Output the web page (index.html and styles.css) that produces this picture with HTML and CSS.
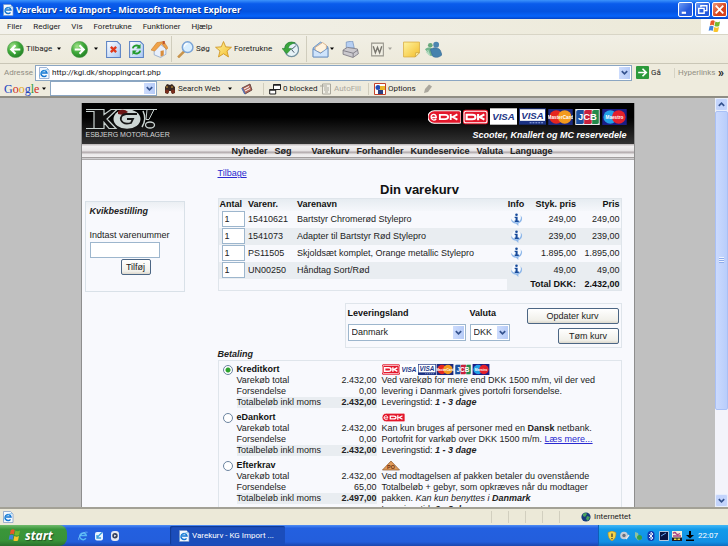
FILE: index.html
```html
<!DOCTYPE html>
<html lang="da">
<head>
<meta charset="utf-8">
<title>Varekurv - KG Import</title>
<link rel="stylesheet" href="styles.css">
</head>
<body>
<svg class="paints" aria-hidden="true">
  <defs>
    <radialGradient id="green" cx=".35" cy=".3" r=".8"><stop offset="0" stop-color="#a5e58c"/><stop offset=".5" stop-color="#3fa93a"/><stop offset="1" stop-color="#1d7a22"/></radialGradient>
    <linearGradient id="paper" x2="1" y2="1"><stop offset="0" stop-color="#fff"/><stop offset="1" stop-color="#a9c8f3"/></linearGradient>
    <linearGradient id="gold" x2="1" y2="1"><stop offset="0" stop-color="#fff4a0"/><stop offset="1" stop-color="#f3bd2c"/></linearGradient>
  </defs>
</svg>
<svg class="sprite" aria-hidden="true">
  <symbol id="back" viewBox="0 0 16 16"><circle cx="8" cy="8" r="7.6" fill="url(#green)" stroke="#4c9a48" stroke-width=".6"/><path d="M12.5 8H4.5M8 4 4 8l4 4" fill="none" stroke="#fff" stroke-width="2"/></symbol>
  <symbol id="fwd" viewBox="0 0 16 16"><circle cx="8" cy="8" r="7.6" fill="url(#green)" stroke="#4c9a48" stroke-width=".6"/><path d="M3.5 8h8M8 4l4 4-4 4" fill="none" stroke="#fff" stroke-width="2"/></symbol>
  <symbol id="stop" viewBox="0 0 16 16"><path d="M1.5.5h10l3 3v12h-13z" fill="url(#paper)" stroke="#5c83c4"/><path d="m5.500 5.500 5 5m0-5-5 5" stroke="#e03a1c" stroke-width="2.2"/></symbol>
  <symbol id="refresh" viewBox="0 0 16 16"><path d="M1.500.5h10l3 3v12h-13z" fill="url(#paper)" stroke="#5c83c4"/><path d="M4.500 7c.5-3 4-3.500 6-2M11.500 9c-.5 3-4 3.500-6 2" fill="none" stroke="#219a2b" stroke-width="1.800"/><path d="M11.800 2.800V7H7.800zM4.200 13.200V9h4z" fill="#219a2b"/></symbol>
  <symbol id="home" viewBox="0 0 16 16"><path d="M3 8v5l6 2.500 5-3V7L8.500 3z" fill="#e9f0fb" stroke="#86a0c8" stroke-width=".7"/><path d="M0 8.500 5.500 1.500 12 .5l4 6-1.500 1.500L10 2.500 3.500 9.500z" fill="#f0a348" stroke="#c4752a" stroke-width=".5"/><path d="M11 0h2v3h-2z" fill="#c05530"/><path d="M9 9.500l3-.7v4.700l-3 1.300z" fill="#d88e3c"/></symbol>
  <symbol id="search" viewBox="0 0 16 16"><path d="m7 9.500-6 6" stroke="#c8944c" stroke-width="2.400"/><circle cx="10" cy="5.800" r="5" fill="#d9efff" stroke="#7ba4d6" stroke-width="1.400"/><path d="M7 5.500a3 3 0 0 1 3-3" stroke="#fff" stroke-width="1.200" fill="none"/></symbol>
  <symbol id="star" viewBox="0 0 16 16"><path d="m8 .5 2.100 5 5.400.4-4.200 3.500 1.400 5.600L8 12l-4.700 3 1.400-5.600L.5 5.900l5.400-.4z" fill="url(#gold)" stroke="#cf9420" stroke-width=".8"/></symbol>
  <symbol id="history" viewBox="0 0 16 16"><circle cx="9" cy="8" r="6.600" fill="#e6f2f7" stroke="#73919f" stroke-width="1.200"/><path d="M9 8l4-3.500M9 8l2.500 3" stroke="#456" stroke-width=".9"/><path d="M12.500 1.800C7-.5 2.500 2.500 2.800 7H0l4.500 5L9 7H6c0-2.500 2.500-4.500 6.500-5.200z" fill="#3ba63c" stroke="#1f7c28" stroke-width=".5"/></symbol>
  <symbol id="mail" viewBox="0 0 16 16"><path d="M1 6.500 8 1l7 4.500V15H1z" fill="#9ec3ed" stroke="#5683ba" stroke-width=".7"/><path d="M3 6l7-4.500 3.500 2.500V9L8 11 3 9z" fill="#fff3df" stroke="#d39a63" stroke-width=".6"/><path d="m1 7.500 7 4L15 6.500V15H1z" fill="#cfe4fb" stroke="#5683ba" stroke-width=".7"/></symbol>
  <symbol id="print" viewBox="0 0 16 16"><path d="M4 7V1l6-1 1.500 6.500z" fill="#b7d0f3" stroke="#7592bd" stroke-width=".7"/><path d="M1 8.500 5 6l9.500 1.500.9 4.500-5 3.500L1 12.500z" fill="#cbc9ce" stroke="#7c7a83" stroke-width=".8"/><path d="m1 9 9.500 2.500L15 8.500M10.500 11.500v3.500" fill="none" stroke="#77757e" stroke-width=".8"/></symbol>
  <symbol id="word" viewBox="0 0 16 16"><path d="M2.500 2h11v12h-11z" fill="#f1efe4" stroke="#97958b"/><path d="M4 5l2 6 2-5 2 5 2-6" fill="none" stroke="#77756d" stroke-width="1.300"/></symbol>
  <symbol id="note" viewBox="0 0 16 16"><path d="M.5 1h15v10l-4 4H.5z" fill="url(#gold)" stroke="#dcb14a" stroke-width=".8"/><path d="m11.500 15 .5-4 3.500 0z" fill="#fff2a5" stroke="#c39a38" stroke-width=".6"/></symbol>
  <symbol id="msn" viewBox="0 0 16 16"><circle cx="5" cy="4" r="2.200" fill="#67a87c"/><circle cx="10.500" cy="3.500" r="2.700" fill="#4d85b0"/><path d="M0 8c2-2.500 6-2.500 7 0l2 4-3 2C3 14 3 10 0 8z" fill="#73b58d"/><path d="M5 8c3-2.500 8-2 9.500 1l1.500 4c-3 3-7 3-9 1z" fill="#4682ad" stroke="#35658f" stroke-width=".5"/><path d="M1 10l3 3M2.500 8.500l2 5" stroke="#b3dbc1"/></symbol>
  <symbol id="ie" viewBox="0 0 12 12"><path d="M1.500.5h7l2.500 2.500v8.500h-9.500z" fill="#f4f9ff" stroke="#7897c4" stroke-width=".7"/><path d="M8.500 8.300A3 3 0 1 1 9 6H3.500" fill="none" stroke="#1677d1" stroke-width="1.400"/><path d="M2 9.500C0 9 6 2 10 2.800" fill="none" stroke="#4fabe9" stroke-width=".8"/></symbol>
  <symbol id="e" viewBox="0 0 12 12"><path d="M9.500 8.500A4 4 0 1 1 10 5.500H3" fill="none" stroke="#56b8f5" stroke-width="1.800"/><path d="M1 11C-1 8 6 0 11.500 1.500" fill="none" stroke="#80cdfa" stroke-width=".8"/></symbol>
  <symbol id="down" viewBox="0 0 10 10"><path d="M2 3.500 5 6.500l3-3" fill="none" stroke="#35538f" stroke-width="1.900"/></symbol>
  <symbol id="up" viewBox="0 0 10 10"><path d="M2 6.500 5 3.500l3 3" fill="none" stroke="#35538f" stroke-width="1.900"/></symbol>
  <symbol id="caret" viewBox="0 0 6 4"><path d="M1 .5h4L3 3z"/></symbol>
  <symbol id="flag" viewBox="0 0 14 14"><path d="M3 1c2-1 3-1 4.300.2L6.300 6C5 5 4 5 2 5.800z" fill="#e8582a"/><path d="M8 1.700c2 1 3 .8 5 0l-1 4.700c-2 1-3 .8-5 0z" fill="#76b82f"/><path d="M1.700 6.800c2-1 3-.8 4.300.1L5 11.800c-1.300-1-2.600-1-4.300-.2z" fill="#3f82dd"/><path d="M6.800 7.500c2 1 3 .9 5 0l-1 4.800c-2 .9-3 .9-5 0z" fill="#f8c42c"/></symbol>
  <symbol id="info" viewBox="0 0 14 14"><path d="M1 6a6 6 0 0 0 5.500 5.600l2.500 2.400v-2.800A6 6 0 0 0 13 5l-1.500-2.500Q12.500 9 7 9.500 3 9.500 1 6z" fill="#8fb8ea"/><circle cx="6.800" cy="5.300" r="4.600" fill="#f7fbff"/><circle cx="7" cy="1.900" r="1.400" fill="#174a9a"/><path d="M5 4h3.200v4.200h1.300v1.600H5V8.200h1V5.500H5z" fill="#174a9a"/></symbol>
  <symbol id="dk" viewBox="0 0 24 14"><rect width="24" height="14" rx="2" fill="#e3172b"/><rect x="1" y="1.500" width="22" height="11" rx="2" fill="none" stroke="#fff" stroke-width="1"/><path d="M3.500 4.800h5.500q3 0 3 2.200T9 9.200H3.500zM14.500 4v6M20.500 4.500 16 7l4.500 2.500" fill="none" stroke="#fff" stroke-width="2"/></symbol>
  <symbol id="edk" viewBox="0 0 32 14"><path d="M6 1h24q2 0 2 2v9q0 1-2 1H6a6 6 0 0 1 0-12z" fill="#e3172b" stroke="#fff" stroke-width="1"/><path d="M2.500 7.500H8C8 3.500 3 3.500 3 7s3.500 3.500 5 2" fill="none" stroke="#fff" stroke-width="1.300"/><path d="M11.500 5h5q3 0 3 2t-3 2h-5zM22 4v6M28.500 4.500 24 7l4.500 2.500" fill="none" stroke="#fff" stroke-width="1.800"/></symbol>
  <symbol id="visa" viewBox="0 0 28 17"><rect width="28" height="17" fill="#fff"/><text x="14" y="12.500" text-anchor="middle" class="visa">VISA</text></symbol>
  <symbol id="electron" viewBox="0 0 28 17"><rect width="28" height="17" fill="#1b3283"/><path d="M1 1h26v12H1z" fill="#fff"/><text x="14" y="11" text-anchor="middle" class="visa">VISA</text><path d="M11 15h15" stroke="#9fb4ee" stroke-dasharray="2 1"/></symbol>
  <symbol id="master" viewBox="0 0 26 17"><rect width="26" height="17" fill="#1c2a80"/><circle cx="8.500" cy="8.500" r="7.300" fill="#e5261f"/><circle cx="17.500" cy="8.500" r="7.300" fill="#f39a1d"/><text x="13" y="10.500" text-anchor="middle" class="brand">MasterCard</text></symbol>
  <symbol id="jcb" viewBox="0 0 26 17"><rect width="26" height="17" fill="#e9edf0"/><path d="M3 1h6v13q0 2-2 2H1V3q0-2 2-2z" fill="#1b4f9f"/><path d="M11.500 1h6v13q0 2-2 2h-6V3q0-2 2-2z" fill="#c8203c"/><path d="M20 1h5v13q0 2-2 2h-5V3q0-2 2-2z" fill="#23894a"/><text x="13" y="12" text-anchor="middle" class="jcb">JCB</text></symbol>
  <symbol id="maestro" viewBox="0 0 26 17"><rect width="26" height="17" fill="#1b1e86"/><circle cx="8.500" cy="8.500" r="7.300" fill="#22a1e6"/><circle cx="17.500" cy="8.500" r="7.300" fill="#e3202b"/><text x="13" y="10.500" text-anchor="middle" class="brand">Maestro</text></symbol>
</svg>

<header class="titlebar">
  <svg class="i12"><use href="#ie"/></svg>
  <h1>Varekurv - KG Import - Microsoft Internet Explorer</h1>
  <button class="win" aria-label="Minimer"><svg viewBox="0 0 12 12"><path d="M2.500 9h4" stroke="#fff" stroke-width="2"/></svg></button>
  <button class="win" aria-label="Gendan"><svg viewBox="0 0 12 12"><path d="M4.500 4V2.500H10V7H8M2.500 5h5v4.500h-5z" fill="none" stroke="#fff" stroke-width="1.300"/></svg></button>
  <button class="win close" aria-label="Luk"><svg viewBox="0 0 12 12"><path d="m2.500 2.500 7 7m0-7-7 7" stroke="#fff" stroke-width="1.700"/></svg></button>
</header>

<nav class="menubar">
  <button>Filer</button><button>Rediger</button><button>Vis</button><button>Foretrukne</button><button>Funktioner</button><button>Hjælp</button>
  <span class="throbber"><svg class="i14"><use href="#flag"/></svg></span>
</nav>

<div class="toolbar">
  <button><svg class="i16"><use href="#back"/></svg>Tilbage</button>
  <svg class="caret"><use href="#caret"/></svg>
  <button aria-label="Frem"><svg class="i16"><use href="#fwd"/></svg></button>
  <svg class="caret"><use href="#caret"/></svg>
  <button aria-label="Stop"><svg class="i16"><use href="#stop"/></svg></button>
  <button aria-label="Opdater"><svg class="i16"><use href="#refresh"/></svg></button>
  <button aria-label="Startside"><svg class="i16"><use href="#home"/></svg></button>
  <button class="ruled"><svg class="i16"><use href="#search"/></svg>Søg</button>
  <button><svg class="i16"><use href="#star"/></svg>Foretrukne</button>
  <button aria-label="Oversigt"><svg class="i16"><use href="#history"/></svg></button>
  <button class="ruled" aria-label="Post"><svg class="i16"><use href="#mail"/></svg></button>
  <svg class="caret"><use href="#caret"/></svg>
  <button aria-label="Udskriv"><svg class="i16"><use href="#print"/></svg></button>
  <button aria-label="Rediger i Word"><svg class="i16"><use href="#word"/></svg></button>
  <svg class="caret faint"><use href="#caret"/></svg>
  <button aria-label="Diskuter"><svg class="i16"><use href="#note"/></svg></button>
  <button aria-label="Messenger"><svg class="i16"><use href="#msn"/></svg></button>
</div>

<form class="address">
  <label for="url">Adresse</label>
  <span class="urlbox"><svg class="i12"><use href="#ie"/></svg><input id="url" value="http://kgi.dk/shoppingcart.php"><button type="button" class="drop" aria-label="Vis adresser"><svg><use href="#down"/></svg></button></span>
  <button type="button" class="go"><svg class="i14" viewBox="0 0 12 12"><rect width="12" height="12" rx="1" fill="#2c9a3b"/><path d="M2 6h7M6 2.500 9.500 6 6 9.500" fill="none" stroke="#fff" stroke-width="1.500"/></svg>Gå</button>
  <span class="links">Hyperlinks</span><b class="more">»</b>
</form>

<form class="google">
  <span class="glogo"><i class="b">G</i><i class="r">o</i><i class="y">o</i><i class="b">g</i><i class="g">l</i><i class="r">e</i></span>
  <svg class="caret"><use href="#caret"/></svg>
  <span class="gbox"><input aria-label="Google-søgning"><button type="button" class="drop" aria-label="Tidligere søgninger"><svg><use href="#down"/></svg></button></span>
  <button type="button"><svg class="i12" viewBox="0 0 12 12"><path d="M1 4l2-3 3 1 2-1 3 3v6l-3 1-1-3H5l-1 3-3-1z" fill="#3b2a22"/><circle cx="3" cy="8.500" r="2" fill="#7a2d1d"/><circle cx="9" cy="8.500" r="2" fill="#7a2d1d"/><path d="M2 4h2m3 0h2" stroke="#d9a13d"/></svg>Search Web</button>
  <svg class="caret"><use href="#caret"/></svg>
  <button type="button" aria-label="Nyheder"><svg class="i12" viewBox="0 0 12 12"><path d="M1 5l8-4 2 6-7 4z" fill="#b86b5b" stroke="#563333" stroke-width=".8"/><path d="M3 6l5-2.500M4 8l5-2.500" stroke="#fff"/><path d="m1 5 3 6" stroke="#5974b5" stroke-width="1.500"/></svg></button>
  <button type="button" class="ruled"><svg class="i12" viewBox="0 0 12 12"><path d="M4.500 1.500h7v5h-7zM.7 6.500h6v4.500h-6z" fill="#fff" stroke="#222"/><path d="M4.500 2h7M.7 7h6" stroke="#222" stroke-width="1.500"/></svg>0 blocked</button>
  <button type="button" class="off"><svg class="i12" viewBox="0 0 12 12"><path d="M2.500 1h8v10h-8z" fill="#f2f0e7" stroke="#aaa89d"/><path d="M0 3h7M4 5h5M4 7h5M5 9h3" stroke="#aaa89d"/></svg>AutoFill</button>
  <button type="button" class="ruled"><svg class="i12" viewBox="0 0 12 12"><path d="M.5.5h11v11H.5z" fill="#fff" stroke="#c54229"/><circle cx="4" cy="4.500" r="2.500" fill="#254db5"/><path d="M6 3h5v4H6z" fill="#eab72c"/><path d="M4 7h5v4H4z" fill="#2c3d7e"/></svg>Options</button>
  <button type="button" aria-label="Fremhæv"><svg class="i12" viewBox="0 0 12 12"><path d="m2 10 1-4 4-4.500 3 2L6 9z" fill="#aaa79d"/></svg></button>
</form>

<div class="viewport">
  <div class="shop">
    <div class="banner">
      <div class="logo">
        <svg viewBox="0 0 72 22" role="img" aria-label="KG!"><g fill="#101010" stroke="#c9d2d0" stroke-width="1.200"><path d="M0 1.500h18v5L25 1.500h6L21 11l9 9.500h-7l-5-6v6H8V3.500H0M25 1.500H71M0 20.500h8"/></g><ellipse cx="41" cy="11" rx="13.500" ry="9.800" fill="#cdd6d4"/><path d="M32 3q6-3 10 1l-5 3-5-1z" fill="#6d1515"/><path d="M51 6H40q-6 1-5 6 2 5 10 3l2-4h-6" fill="none" stroke="#161616" stroke-width="1.800"/><path d="M57 3q4 8-1 16" fill="none" stroke="#c9d2d0" stroke-width="1.500"/><path d="M61 1.500h7l-5 10h-3z" fill="#101010" stroke="#c9d2d0"/><ellipse cx="64" cy="17" rx="4.500" ry="3" fill="#111" stroke="#c9d2d0" stroke-width="1.300"/></svg>
        <span>ESBJERG MOTORLAGER</span>
      </div>
      <div class="slogan">
        <div class="cards"><svg class="wide"><use href="#edk"/></svg><svg><use href="#dk"/></svg><svg class="v"><use href="#visa"/></svg><svg class="v"><use href="#electron"/></svg><svg><use href="#master"/></svg><svg><use href="#jcb"/></svg><svg><use href="#maestro"/></svg></div>
        <p>Scooter, Knallert og MC reservedele</p>
      </div>
    </div>
    <nav class="tabs">
      <a href="#">Nyheder</a><a href="#">Søg</a><span></span><a href="#">Varekurv</a><a href="#">Forhandler</a><a href="#">Kundeservice</a><a href="#">Valuta</a><a href="#">Language</a>
    </nav>
    <div class="body">
      <form class="quick">
        <h3>Kvikbestilling</h3>
        <label for="nr">Indtast varenummer</label>
        <input id="nr">
        <button type="button" class="xp">Tilføj</button>
      </form>
      <main>
        <a class="link" href="#">Tilbage</a>
        <h2>Din varekurv</h2>
        <table class="cart">
          <colgroup><col class="c1"><col class="c2"><col><col class="c4"><col class="c5"><col class="c6"></colgroup>
          <thead><tr><th>Antal</th><th>Varenr.</th><th>Varenavn</th><th class="mid">Info</th><th class="num">Styk. pris</th><th class="num">Pris</th></tr></thead>
          <tbody>
            <tr><td><input value="1" aria-label="Antal 15410621"></td><td>15410621</td><td>Bartstyr Chromerød Stylepro</td><td class="mid"><svg><use href="#info"/></svg></td><td class="num">249,00</td><td class="num">249,00</td></tr>
            <tr><td><input value="1" aria-label="Antal 1541073"></td><td>1541073</td><td>Adapter til Bartstyr Rød Stylepro</td><td class="mid"><svg><use href="#info"/></svg></td><td class="num">239,00</td><td class="num">239,00</td></tr>
            <tr><td><input value="1" aria-label="Antal PS11505"></td><td>PS11505</td><td>Skjoldsæt komplet, Orange metallic Stylepro</td><td class="mid"><svg><use href="#info"/></svg></td><td class="num">1.895,00</td><td class="num">1.895,00</td></tr>
            <tr><td><input value="1" aria-label="Antal UN00250"></td><td>UN00250</td><td>Håndtag Sort/Rød</td><td class="mid"><svg><use href="#info"/></svg></td><td class="num">49,00</td><td class="num">49,00</td></tr>
          </tbody>
          <tfoot><tr><td colspan="3"></td><th colspan="2" class="num">Total DKK:</th><th class="num">2.432,00</th></tr></tfoot>
        </table>
        <form class="delivery">
          <div class="field land"><label for="land">Leveringsland</label><span class="select"><select id="land"><option>Danmark</option></select><i class="drop"><svg><use href="#down"/></svg></i></span></div>
          <div class="field"><label for="valuta">Valuta</label><span class="select"><select id="valuta"><option>DKK</option></select><i class="drop"><svg><use href="#down"/></svg></i></span></div>
          <div class="actions"><button type="button" class="xp full">Opdater kurv</button><button type="button" class="xp">Tøm kurv</button></div>
        </form>
        <h3>Betaling</h3>
        <form class="pay">
          <section>
            <input type="radio" name="pay" id="p1" checked>
            <div class="sum"><label for="p1">Kreditkort</label>
              <dl><dt>Varekøb total</dt><dd>2.432,00</dd><dt>Forsendelse</dt><dd>0,00</dd><dt class="tot">Totalbeløb inkl moms</dt><dd class="tot">2.432,00</dd></dl></div>
            <div class="text"><div class="mini"><svg><use href="#dk"/></svg><svg><use href="#visa"/></svg><svg><use href="#electron"/></svg><svg><use href="#master"/></svg><svg><use href="#jcb"/></svg><svg><use href="#maestro"/></svg></div>
              <p>Ved varekøb for mere end DKK 1500 m/m, vil der ved<br>levering i Danmark gives portofri forsendelse.<br>Leveringstid: <b><i>1 - 3 dage</i></b></p></div>
          </section>
          <section>
            <input type="radio" name="pay" id="p2">
            <div class="sum"><label for="p2">eDankort</label>
              <dl><dt>Varekøb total</dt><dd>2.432,00</dd><dt>Forsendelse</dt><dd>0,00</dd><dt class="tot">Totalbeløb inkl moms</dt><dd class="tot">2.432,00</dd></dl></div>
            <div class="text"><div class="mini"><svg class="edk"><use href="#edk"/></svg></div>
              <p>Kan kun bruges af personer med en <b>Dansk</b> netbank.<br>Portofrit for varkøb over DKK 1500 m/m. <a class="link" href="#">Læs mere...</a><br>Leveringstid: <b><i>1 - 3 dage</i></b></p></div>
          </section>
          <section>
            <input type="radio" name="pay" id="p3">
            <div class="sum"><label for="p3">Efterkrav</label>
              <dl><dt>Varekøb total</dt><dd>2.432,00</dd><dt>Forsendelse</dt><dd>65,00</dd><dt class="tot">Totalbeløb inkl moms</dt><dd class="tot">2.497,00</dd></dl></div>
            <div class="text"><div class="mini"><svg viewBox="0 0 20 11"><path d="M10 .5 19.500 10.500H.5z" fill="#e09a58" stroke="#8f5a2c" stroke-width=".8"/><text x="10" y="9" text-anchor="middle" class="po">PO</text></svg></div>
              <p>Ved modtagelsen af pakken betaler du ovenstående<br>Totalbeløb + gebyr, som opkræves når du modtager<br>pakken. <i>Kan kun benyttes i <b>Danmark</b></i><br>Leveringstid: <b><i>2 - 3 dage</i></b></p></div>
          </section>
        </form>
      </main>
    </div>
  </div>
  <div class="scroll"><button aria-label="Rul op"><svg><use href="#up"/></svg></button><div class="track"><div class="thumb"></div></div><button aria-label="Rul ned"><svg><use href="#down"/></svg></button></div>
</div>

<footer class="status">
  <svg class="i12"><use href="#ie"/></svg>
  <span class="cells"><i></i><i></i><i></i><i></i><i></i></span>
  <span class="zone"><svg class="i10" viewBox="0 0 10 10"><circle cx="5" cy="5" r="4.600" fill="#173a7c"/><path d="M2 2q3-2 4 0L4 5 2 4zM6 4l3 1-2 4-2-2z" fill="#49a35d"/></svg>Internettet</span>
</footer>

<div class="taskbar">
  <button class="start"><svg class="i14"><use href="#flag"/></svg>start</button>
  <div class="launch"><svg class="i10"><use href="#e"/></svg><svg class="i10" viewBox="0 0 10 10"><rect x="1" y="1" width="8" height="8.500" rx="2" fill="#e9f5ff"/><path d="M3 6.500 8 1.500M3 4v3h4" stroke="#3b9fdb" stroke-width="1.300" fill="none"/></svg><svg class="i10" viewBox="0 0 10 10"><rect x="1" width="8" height="10" rx="3" fill="#e6e9f2"/><circle cx="5" cy="4.800" r="2.700" fill="#35415f"/><path d="m4.200 3.500 2.200 1.300-2.200 1.300z" fill="#fff"/></svg></div>
  <button class="task"><svg class="i12"><use href="#ie"/></svg>Varekurv - KG Import ...</button>
  <div class="tray">
    <svg class="i10" viewBox="0 0 10 10"><path d="M1 1.500 5 0l4 1.500c0 4-1 7-4 8.500C2 8.500 1 5.500 1 1.500z" fill="#f7d446" stroke="#b88f1e" stroke-width=".6"/><path d="M5 2.500v3.500M5 7v1.200" stroke="#333" stroke-width="1.200"/></svg>
    <svg class="i10" viewBox="0 0 10 10"><circle cx="4" cy="4.500" r="3.800" fill="#c8cdd5"/><circle cx="4" cy="4.500" r="1.700" fill="#68707e"/><path d="m6 8 3-4" stroke="#e8e8e8" stroke-width="1.300"/></svg>
    <svg class="i10" viewBox="0 0 10 10"><path d="M2 1l3 1 1 4 3 2-4 1.500L2 6z" fill="#8cc1a3"/><circle cx="6.500" cy="6.500" r="2.500" fill="#35a04a"/></svg>
    <svg class="i10" viewBox="0 0 10 10"><rect x="1.500" width="7" height="10" rx="3.500" fill="#123bb2"/><path d="m3 3 4 4-2 1.700V1.300L7 3 3 7" fill="none" stroke="#fff" stroke-width=".9"/></svg>
    <svg class="i10" viewBox="0 0 10 10"><path d="M.5.5h9v9h-9z" fill="#091543" stroke="#dfe6f2" stroke-width=".8"/><path d="m2 5 5-3" stroke="#63a4ee"/></svg>
    <svg class="i10" viewBox="0 0 10 10"><path d="M0 0h10v10H0z" fill="#f2efd9"/><path d="M1 2.500q2-2 3 0t4 0M1 5h8" fill="none" stroke="#ab3f83" stroke-width="1.500"/><path d="M0 6.500h10V10H0z" fill="#1b1b27"/><path d="M2 8.200h2.500m1 0H8" stroke="#f5da3e" stroke-width="1.500"/></svg>
    <svg class="i10" viewBox="0 0 10 10"><path d="M4 0h2v4h3L5 7.500 1 4h3zM1 8.500h8V10H1z"/></svg>
    <time>22:07</time>
  </div>
</div>
</body>
</html>
```
FILE: styles.css
```css
* { box-sizing: border-box; }

html, body { height: 100%; }

body {
  margin: 0;
  display: flex;
  flex-direction: column;
  overflow: hidden;
  background: #c0c0c0;
  color: #222;
  font: 8px/10px Roboto, "Noto Sans", sans-serif;
}

h1, h2, h3, p, dl, dd { margin: 0; }

button, input, select {
  font: inherit;
  color: inherit;
  margin: 0;
  padding: 0;
  border: 0;
  background: none;
}

svg { display: block; flex: none; }

.paints { position: absolute; width: 0; height: 0; }
.sprite { display: none; }
.i10 { width: 10px; height: 10px; }
.i12 { width: 12px; height: 12px; }
.i14 { width: 13px; height: 13px; }
.i16 { width: 17px; height: 17px; }
.caret { width: 6px; height: 4px; }
.faint { opacity: .3; }

/* Window frame */
.titlebar {
  flex: none;
  display: flex;
  align-items: center;
  gap: 2px;
  height: 19px;
  padding: 0 1px 0 2px;
  background: linear-gradient(#3c93fb, #0a5cec 20%, #0453e0 60%, #0663fa 85%, #0343c5);
}

.titlebar h1 {
  flex: 1;
  color: #fff;
  font: bold 9px/12px "Noto Sans", sans-serif;
  text-shadow: 1px 1px 0 #0b3591;
}

.win {
  width: 15px;
  height: 15px;
  border: 1px solid #fff;
  border-radius: 2px;
  background: linear-gradient(135deg, #6c9bf5, #2459dc 60%);
}

.win.close { background: linear-gradient(135deg, #f0977c, #d5431c 60%); }

.menubar {
  flex: none;
  display: flex;
  gap: 11px;
  height: 16px;
  padding-left: 7px;
  background: linear-gradient(90deg, #f3f2ec, #ece9d8);
  border-bottom: 1px solid #d8d5c6;
}

.throbber {
  margin-left: auto;
  width: 27px;
  display: grid;
  place-items: center;
  background: #fff;
}

.toolbar {
  flex: none;
  display: grid;
  grid-template-columns: 49px 15px 22px 12px 23px 23px 20px 44px 67px 24px 23px 13px 27px 18px 16px 22px 24px;
  align-items: center;
  height: 29px;
  padding-left: 7px;
  background: linear-gradient(#f1efe5, #edeadb);
  border-bottom: 1px solid #c9c6b6;
}

.toolbar button, .google button, .go {
  display: flex;
  align-items: center;
  gap: 2px;
  white-space: nowrap;
}

.ruled { border-left: 1px solid #d0cdbd; padding-left: 5px; }
.toolbar .ruled { height: 26px; }

.address {
  flex: none;
  display: flex;
  align-items: center;
  height: 17px;
  padding: 0 2px 0 4px;
  background: #eeebdd;
}

.address label { width: 31px; color: #8e8c82; }

.urlbox, .gbox {
  flex: 1;
  display: flex;
  align-items: center;
  height: 16px;
  padding: 1px 1px 1px 2px;
  border: 1px solid #8ba6c2;
  background: #fff;
}

.urlbox input { flex: 1; min-width: 0; padding-left: 2px; }

.drop {
  flex: none;
  width: 11px;
  height: 100%;
  display: grid;
  place-items: center;
  background: linear-gradient(90deg, #cddcfd, #b6cbf7);
}

.google .drop { display: grid; }
.drop svg { width: 9px; height: 9px; }

.go { width: 38px; margin-left: 4px; }
.links { width: 44px; padding-left: 3px; border-left: 1px solid #d6d3c4; color: #918f84; }
.more { width: 8px; font-size: 12px; line-height: 12px; }

.google {
  flex: none;
  display: grid;
  grid-template-columns: 37px 9px 107px 70px 14px 22px 57px 48px 54px 14px;
  align-items: center;
  height: 17px;
  padding-left: 4px;
  background: #eeebdd;
  border-bottom: 2px solid #8f8d84;
}

.gbox { height: 15px; }
.gbox input { flex: 1; min-width: 0; }
.google > .gbox + button { padding-left: 7px; }
.off { color: #aaa89d; }

.glogo { font: 12px/14px "Liberation Serif", serif; }
.glogo i { font-style: normal; }
.b { color: #2246c0; }
.r { color: #cf2a21; }
.y { color: #e0a91a; }
.g { color: #2b9a3c; }

/* Page area */
.viewport {
  flex: 1;
  min-height: 0;
  display: flex;
  justify-content: center;
  overflow: hidden;
  background: #c0c0c0;
}

.shop {
  flex: 0 1 554px;
  margin: 5px auto 0;
  border: solid #8e8e8e;
  border-width: 0 1px;
  background: #f8f9fd;
  font: 9px/11px "Liberation Sans", Arial, sans-serif;
  height: max-content;
}

.banner {
  display: flex;
  justify-content: space-between;
  height: 41px;
  padding: 5px 7px 0 4px;
  background: linear-gradient(#000 35%, #333);
  color: #fff;
}

.logo svg { width: 72px; height: 22px; }
.logo span { display: block; color: #d5d5d5; font-size: 7px; line-height: 9px; }
.slogan { display: flex; flex-direction: column; align-items: flex-end; gap: 5px; font-weight: bold; font-style: italic; }
.cards { display: flex; align-items: center; gap: 2px; }
.cards svg { width: 25px; height: 16px; }
.cards .wide { width: 33px; }
.cards .v { width: 27px; height: 17px; }
.visa { font: italic bold 10px "Liberation Sans", sans-serif; fill: #1c3687; }
.brand { font: bold 5px "Liberation Sans", sans-serif; fill: #fff; }
.jcb { font: bold 10px "Liberation Sans", sans-serif; fill: #fff; }
.po { font: bold 6px "Liberation Sans", sans-serif; fill: #6d3415; }

.tabs {
  display: flex;
  gap: 7px;
  height: 16px;
  padding-left: 150px;
  background: linear-gradient(#b9b4b4, #f3f1f2 15%, #e9e6e7 40%, #b3abad 52%, #eceaeb 65%, #f1eff0 80%, #85807f 86%, #e4e4e6 92%, #8a8686);
}

.tabs span { width: 6px; }
.tabs a { color: #222; font-weight: bold; line-height: 14px; text-decoration: none; }

.body {
  display: grid;
  grid-template-columns: 100px minmax(0, 404px);
  column-gap: 33px;
  padding: 8px 11px 0 3px;
}

h3 { font-size: 9px; line-height: 11px; font-style: italic; }
.link { color: #2a2ad0; text-decoration: underline; }

.quick {
  display: flex;
  flex-direction: column;
  height: 91px;
  margin-top: 33px;
  padding: 4px;
  border: 1px solid #d9e1e8;
  background: linear-gradient(#ebeff3, #f8f9fd 10px);
}

.quick label { margin: 13px 0 1px; white-space: nowrap; }

.quick input, .cart input {
  border: 1px solid #9db6cd;
  background: #fff;
}

.quick input { width: 70px; height: 16px; }
.quick .xp { align-self: flex-start; margin: 1px 0 0 31px; width: 30px; }

.xp {
  height: 16px;
  border: 1px solid #4c6684;
  border-radius: 2px;
  background: linear-gradient(#fff, #f1f0ea 80%, #dcd8cd);
}

main { display: flex; flex-direction: column; }
main > .link { align-self: flex-start; }
h2 { margin: 4px 0 1px; font-size: 13px; line-height: 14px; text-align: center; color: #111; }

.cart {
  width: 100%;
  table-layout: fixed;
  border-collapse: collapse;
  border: 1px solid #dfe5eb;
}

.c1 { width: 29px; }
.c2 { width: 49px; }
.c4 { width: 18px; }
.c5 { width: 52px; }
.c6 { width: 44px; }
.cart th, .cart td { padding: 0 1px; text-align: left; white-space: nowrap; }
.cart th { height: 12px; color: #111; }
.cart thead tr { background: linear-gradient(#e6ecf1, #f5f7fb); }
.cart tbody td { height: 17px; }
.cart tbody tr:nth-child(even), .cart tfoot th { background: #e9edf1; }
.cart input { display: block; width: 23px; height: 16px; margin-left: 2px; padding: 0 2px; }
.cart .mid { padding: 0; text-align: center; }
.cart .mid svg { width: 13px; height: 13px; margin: 0 auto; }
.cart .num { text-align: right; }

.delivery {
  align-self: flex-end;
  display: flex;
  gap: 4px;
  width: 277px;
  margin-top: 12px;
  padding: 4px 2px 3px;
  border: 1px solid #dfe5eb;
}

.field { display: flex; flex-direction: column; gap: 5px; width: 40px; }
.field.land { width: 118px; }
.field label { font-weight: bold; color: #111; }

.select {
  display: flex;
  height: 17px;
  padding: 1px;
  border: 1px solid #9db6cd;
  background: #fff;
}

.select select { flex: 1; min-width: 0; appearance: none; padding-left: 2px; }
.actions { flex: 1; display: flex; flex-direction: column; align-items: flex-end; gap: 4px; }
.actions .xp { width: 61px; }
.actions .full { width: 92px; }

main > h3 { margin-top: 1px; }

.pay { border: 1px solid #dfe5eb; padding: 3px 4px 8px; }

.pay section {
  display: grid;
  grid-template-columns: 14px 140px 1fr;
  height: 48px;
}

.pay input {
  appearance: none;
  width: 10px;
  height: 10px;
  margin-top: 1px;
  border: 1px solid #6b84a0;
  border-radius: 50%;
  background: #fff;
}

.pay input:checked { background: radial-gradient(circle, #2da32d 0 2px, #fff 3px); }
.sum label { font-weight: bold; display: block; color: #111; }
dl { display: grid; grid-template-columns: 1fr auto; }
dd { text-align: right; }
.tot { background: #e9edf1; }
dd.tot { font-weight: bold; }
.text { padding-left: 5px; white-space: nowrap; }
.mini { display: flex; height: 11px; }
.mini svg { width: 18px; height: 11px; }
.mini .edk { width: 23px; }

.scroll { flex: none; display: flex; flex-direction: column; width: 13px; background: #f3f4fb; }
.scroll button { height: 13px; display: grid; place-items: center; border: 1px solid #e8effd; border-radius: 2px; background: #c3d4fc; }
.scroll button svg { width: 9px; height: 9px; }
.track { flex: 1; }
.thumb { height: 78%; border: 1px solid #a9c0f5; border-radius: 2px; background: repeating-linear-gradient(#eef4ff 0 1px, #8eabeb 1px 2px) center / 5px 6px no-repeat, linear-gradient(90deg, #cbdafe, #b9cdfb); }

.status {
  flex: none;
  display: flex;
  align-items: center;
  height: 18px;
  padding-left: 2px;
  background: #ece9d8;
  border-top: 2px solid #a3a196;
}

.cells { margin-left: auto; display: flex; }
.cells i { width: 17px; height: 12px; border-left: 1px solid #d2cfbf; }
.zone { display: flex; align-items: center; gap: 3px; width: 152px; padding-left: 5px; }

.taskbar {
  flex: none;
  display: flex;
  align-items: stretch;
  height: 21px;
  background: linear-gradient(#4f8df5, #2360e0 15%, #235edc 80%, #1c46ad);
  color: #fff;
}

.start {
  display: flex;
  align-items: center;
  gap: 4px;
  width: 67px;
  padding-left: 8px;
  border-radius: 0 8px 8px 0;
  background: linear-gradient(#71bb6d, #3a963a 20%, #389238 75%, #2a702c);
  font: italic bold 12px/14px "Open Sans", sans-serif;
  text-shadow: 1px 1px 1px #234f21;
}

.launch { display: flex; align-items: center; gap: 6px; width: 103px; padding-left: 11px; }

.task {
  display: flex;
  align-items: center;
  gap: 2px;
  width: 115px;
  margin: 1px 0;
  padding-left: 8px;
  border-radius: 2px;
  background: #1b4dbb;
  box-shadow: inset 1px 1px 1px #123a92;
}

.tray {
  display: flex;
  align-items: center;
  gap: 3px;
  width: 130px;
  margin-left: auto;
  padding-left: 8px;
  border-left: 1px solid #0c5fb8;
  background: linear-gradient(#42b7f5, #139bea 20%, #1290e5 80%, #0f6dc0);
}
```
